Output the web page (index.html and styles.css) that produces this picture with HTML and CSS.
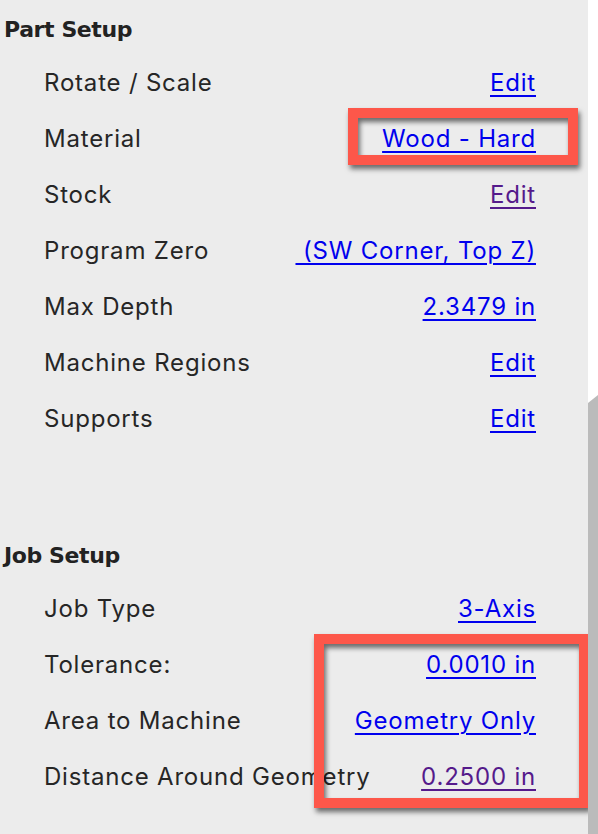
FILE: index.html
```html
<!DOCTYPE html>
<html lang="en">
<head>
    <meta charset="UTF-8">
    <meta name="viewport" content="width=device-width, initial-scale=1.0">
    <title>Part Setup</title>
    <link rel="stylesheet" href="styles.css">
</head>
<body>
    <div class="page">
        <div class="panel">
            <h2 class="section-title">Part Setup</h2>
            <div class="rows">
                <div class="row"><span class="label">Rotate / Scale</span><a href="#" class="value">Edit</a></div>
                <div class="row"><span class="label">Material</span><a href="#" class="value">Wood - Hard</a></div>
                <div class="row"><span class="label">Stock</span><a href="#" class="value visited">Edit</a></div>
                <div class="row"><span class="label">Program Zero</span><a href="#" class="value">&nbsp;(SW Corner, Top Z)</a></div>
                <div class="row"><span class="label">Max Depth</span><a href="#" class="value">2.3479 in</a></div>
                <div class="row"><span class="label">Machine Regions</span><a href="#" class="value">Edit</a></div>
                <div class="row"><span class="label">Supports</span><a href="#" class="value">Edit</a></div>
            </div>

            <h2 class="section-title job">Job Setup</h2>
            <div class="rows">
                <div class="row"><span class="label">Job Type</span><a href="#" class="value">3-Axis</a></div>
                <div class="row"><span class="label">Tolerance:</span><a href="#" class="value">0.0010 in</a></div>
                <div class="row"><span class="label">Area to Machine</span><a href="#" class="value">Geometry Only</a></div>
                <div class="row"><span class="label">Distance Around Geometry</span><a href="#" class="value visited">0.2500 in</a></div>
            </div>

            <!-- annotation boxes drawn over the screenshot -->
            <div class="callout callout-material"></div>
            <div class="callout callout-job"></div>
        </div>
        <div class="edge"></div>
    </div>
</body>
</html>
```

FILE: styles.css
```css
html, body {
    margin: 0;
    padding: 0;
}
body {
    background: #fff;
    width: 598px;
    height: 834px;
    overflow: hidden;
}
.page {
    display: flex;
    height: 834px;
}
.panel {
    position: relative;
    width: 588px;
    flex: none;
    background: #ececec;
}
.edge {
    flex: 1;
    background: #bbbbbb;
    clip-path: polygon(0 403px, 100% 395px, 100% 100%, 0 100%);
}
.section-title {
    margin: 0;
    padding: 4px 0 0 4px;
    line-height: 51px;
    font-family: "DejaVu Sans", Verdana, sans-serif;
    font-weight: bold;
    font-size: 22px;
    letter-spacing: -0.4px;
    color: #222;
}
.section-title.job {
    margin-top: 79px;
}
.row {
    display: flex;
    justify-content: space-between;
    align-items: baseline;
    height: 56px;
    line-height: 56px;
    padding: 0 52px 0 44px;
    font-family: Inter, "Liberation Sans", sans-serif;
    font-size: 24px;
    letter-spacing: 0.8px;
}
.label {
    color: #262626;
    white-space: nowrap;
}
.value {
    color: #0000ee;
    white-space: nowrap;
    text-decoration: underline;
    text-decoration-thickness: 2px;
    text-underline-offset: 4px;
}
.value.visited {
    color: #551a8b;
}
.callout {
    position: absolute;
    box-sizing: border-box;
    border: 10px solid #fd574a;
    box-shadow: 2px 4px 5px rgba(0,0,0,0.55), inset 2px 4px 5px rgba(0,0,0,0.55);
}
.callout-material {
    left: 348px;
    top: 108px;
    width: 230px;
    height: 57px;
}
.callout-job {
    left: 314px;
    top: 634px;
    width: 275px;
    height: 174px;
}
```
